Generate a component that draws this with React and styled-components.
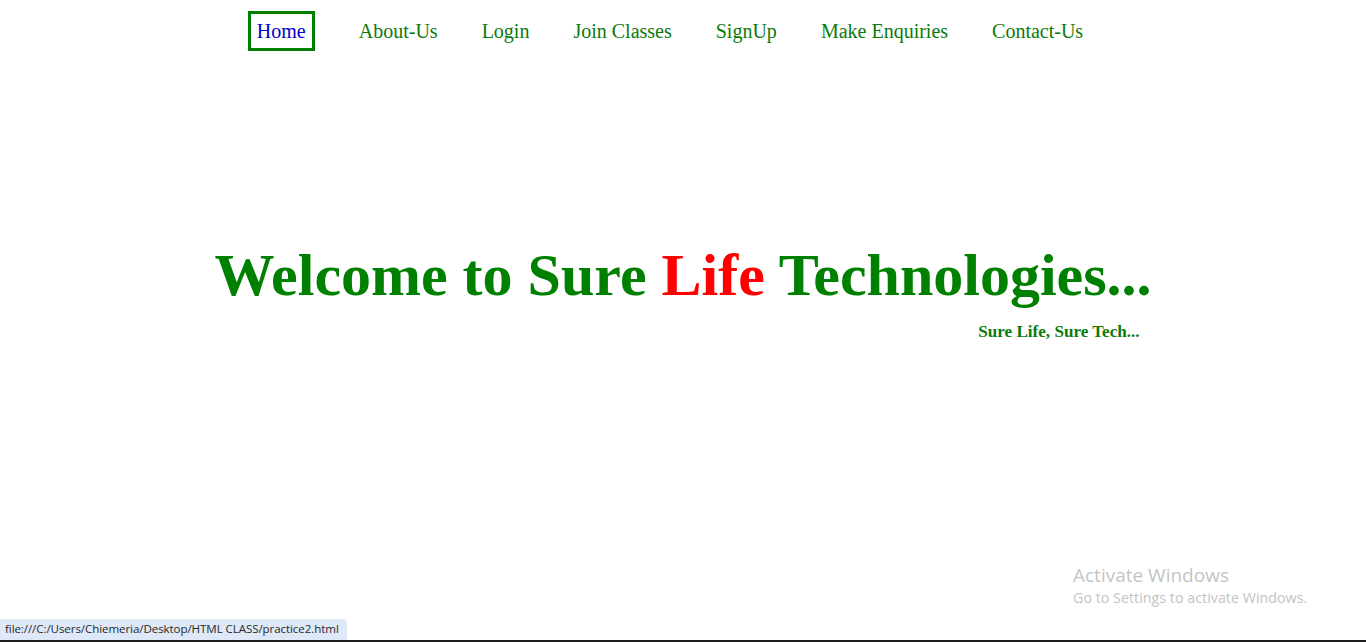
import React from "react";
import styled, {createGlobalStyle} from "styled-components";

const GlobalStyle = createGlobalStyle`
    html, body {
        margin: 0;
        padding: 0;
        background: #fff;
        font-family: "Liberation Serif", "Times New Roman", serif;
    }
    #root {
        min-height: 642px;
    }
`

const Page = styled.div`
    height: 642px;
    display: flex;
    flex-direction: column;
    position: relative;
    overflow: hidden;
`

const Nav = styled.nav`
    display: flex;
    justify-content: center;
    align-items: center;
    gap: 26px;
    padding: 11px 26px 0 0;
`

const NavLink = styled.a`
    font-size: 20px;
    line-height: 24px;
    padding: 5px 6px;
    margin-right: ${props => props.$active ? "9px" : "0"};
    border: 3px solid ${props => props.$active ? "#008000" : "transparent"};
    color: ${props => props.$active ? "#0000cc" : "#0b7a0b"};
    text-decoration: none;
    cursor: pointer;
`

const Hero = styled.section`
    display: flex;
    justify-content: center;
    padding-top: 190px;
`

const HeroInner = styled.div`
    display: flex;
    flex-direction: column;
`

const Title = styled.h1`
    margin: 0;
    font-size: 60px;
    font-weight: bold;
    line-height: 68px;
    color: #008000;
    white-space: nowrap;
`

const Red = styled.span`
    color: #ff0000;
`

const Tagline = styled.p`
    margin: 13px 12px 0 0;
    align-self: flex-end;
    font-size: 17.1px;
    font-weight: bold;
    color: #0b7a0b;
`

const Watermark = styled.div`
    position: absolute;
    left: 1073px;
    top: 563px;
    font-family: "Open Sans", "Noto Sans", sans-serif;
    color: #c4c4c4;

    div:first-child {
        font-size: 19px;
        line-height: 25px;
    }

    div:last-child {
        font-size: 14.3px;
        line-height: 19px;
    }
`

const StatusBar = styled.div`
    position: absolute;
    left: 0;
    bottom: 2px;
    width: 347px;
    height: 21px;
    box-sizing: border-box;
    padding: 2px 0 0 5px;
    background: #dee8f6;
    border-top-right-radius: 4px;
    font-family: "Open Sans", "Noto Sans", sans-serif;
    font-size: 11.6px;
    color: #2a2a2a;
    white-space: nowrap;
    letter-spacing: -0.1px;
`

const BottomEdge = styled.div`
    position: absolute;
    left: 0;
    right: 0;
    bottom: 0;
    height: 2px;
    background: #1e1e1e;
`

const links = ["Home", "About-Us", "Login", "Join Classes", "SignUp", "Make Enquiries", "Contact-Us"]

export default function App() {
    return (
        <>
            <GlobalStyle/>
            <Page>
                <Nav>
                    {links.map((l, i) => (
                        <NavLink key={l} $active={i === 0}>{l}</NavLink>
                    ))}
                </Nav>
                <Hero>
                    <HeroInner>
                        <Title>Welcome to Sure <Red>Life</Red> Technologies...</Title>
                        <Tagline>Sure Life, Sure Tech...</Tagline>
                    </HeroInner>
                </Hero>
                <Watermark>
                    <div>Activate Windows</div>
                    <div>Go to Settings to activate Windows.</div>
                </Watermark>
                <StatusBar>file:///C:/Users/Chiemeria/Desktop/HTML CLASS/practice2.html</StatusBar>
                <BottomEdge/>
            </Page>
        </>
    );
};
